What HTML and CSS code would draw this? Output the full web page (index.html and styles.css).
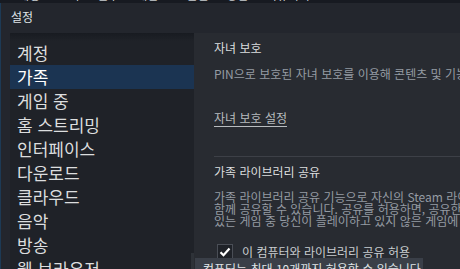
FILE: index.html
```html
<!DOCTYPE html>
<html lang="ko">
<head>
<meta charset="utf-8">
<link rel="stylesheet" href="styles.css">
</head>
<body>
<div class="topstrip"><div class="topstrip-text">계정 보기 친구 게임 도움말 상점 커뮤니티</div></div>
<div class="window">
  <div class="titlebar">설정</div>
  <div class="main">
    <nav class="sidebar">
      <div class="nav-top"></div>
      <div class="nav-item">계정</div>
      <div class="nav-item selected">가족</div>
      <div class="nav-item">게임 중</div>
      <div class="nav-item">홈 스트리밍</div>
      <div class="nav-item">인터페이스</div>
      <div class="nav-item">다운로드</div>
      <div class="nav-item">클라우드</div>
      <div class="nav-item">음악</div>
      <div class="nav-item">방송</div>
      <div class="nav-item">웹 브라우저</div>
      <div class="scrollbar"></div>
    </nav>
    <section class="content">
      <div class="section">
        <div class="heading">자녀 보호</div>
        <div class="desc">PIN으로 보호된 자녀 보호를 이용해 콘텐츠 및 기능에 대한 접근을 제한합니다.</div>
        <a class="link">자녀 보호 설정</a>
      </div>
      <div class="divider"></div>
      <div class="section">
        <div class="heading">가족 라이브러리 공유</div>
        <div class="para">
          <div>가족 라이브러리 공유 기능으로 자신의 Steam 라이브러리를 가족 및 손님과</div>
          <div>함께 공유할 수 있습니다. 공유를 허용하면, 공유한 사람이 해당 컴퓨터에</div>
          <div>있는 게임 중 당신이 플레이하고 있지 않은 게임에 접근할 수 있습니다.</div>
        </div>
        <div class="check-row">
          <span class="checkbox"><svg width="12" height="10" viewBox="0 0 12 10"><path d="M1.5 5.2 L4.5 8.2 L10.5 1.5" fill="none" stroke="#ffffff" stroke-width="2.2"/></svg></span>
          <span class="check-label">이 컴퓨터와 라이브러리 공유 허용</span>
        </div>
      </div>
      <div class="tooltip">컴퓨터는 최대 10개까지 허용할 수 있습니다</div>
    </section>
  </div>
</div>
</body>
</html>
```
FILE: styles.css
```css
html, body {
  margin: 0;
  padding: 0;
  width: 460px;
  height: 269px;
  overflow: hidden;
  background: #171a21;
  font-family: "Noto Sans CJK KR", "Noto Sans", sans-serif;
}
.topstrip {
  height: 3px;
  overflow: hidden;
  background: #171a21;
}
.topstrip-text {
  margin-top: -11px;
  padding-left: 18px;
  font-size: 12px;
  line-height: 12px;
  color: #c8ccd0;
  word-spacing: 14px;
  white-space: nowrap;
}
.window {
  height: 266px;
  background: #23262d;
  border-left: 1px solid #1d3a55;
  display: flex;
  flex-direction: column;
  overflow: hidden;
}
.titlebar {
  height: 30px;
  line-height: 28px;
  padding-left: 10px;
  font-size: 12px;
  color: #dfe3e6;
  flex: none;
}
.main {
  flex: 1;
  display: flex;
  min-height: 0;
}
.sidebar {
  position: relative;
  margin-left: 9px;
  width: 184px;
  flex: none;
  background: #1f2228;
  overflow: hidden;
}
.nav-top {
  height: 8px;
  background: linear-gradient(#181b21, #1f2228);
}
.nav-item {
  height: 24px;
  line-height: 24px;
  padding-left: 7px;
  font-size: 17px;
  color: #dcdedf;
  white-space: nowrap;
}
.nav-item.selected {
  background: #1b3452;
  color: #ffffff;
}
.scrollbar {
  position: absolute;
  right: 0;
  top: 220px;
  width: 3px;
  height: 20px;
  background: #2e3238;
}
.content {
  position: relative;
  flex: 1;
  min-width: 0;
  background: #282b31;
  padding-left: 20px;
  overflow: hidden;
  white-space: nowrap;
}
.section {
  padding-top: 8px;
}
.heading {
  font-size: 12px;
  line-height: 14px;
  color: #dcdedf;
}
.desc {
  margin-top: 12px;
  font-size: 12px;
  line-height: 14px;
  color: #959ba3;
}
.link {
  display: inline-block;
  margin-top: 30px;
  font-size: 12px;
  line-height: 14px;
  color: #b8bcbf;
  text-decoration: underline;
  text-underline-offset: 3px;
}
.divider {
  height: 1px;
  background: #3d4047;
  margin-top: 28px;
}
.para {
  margin-top: 12px;
  font-size: 12px;
  line-height: 12px;
  color: #959ba3;
}
.check-row {
  display: flex;
  align-items: center;
  margin-top: 17px;
  margin-left: 3px;
}
.checkbox {
  width: 14px;
  height: 14px;
  border: 1px solid #4a4e56;
  background: #1f2228;
  display: flex;
  align-items: center;
  justify-content: center;
  flex: none;
}
.check-label {
  margin-left: 9px;
  font-size: 12px;
  line-height: 14px;
  color: #c9cdd0;
}
.tooltip {
  position: absolute;
  left: 1px;
  top: 225px;
  width: 212px;
  padding: 4px 8px;
  background: #3a3f48;
  color: #dfe3e6;
  font-size: 12px;
  line-height: 14px;
}
```
